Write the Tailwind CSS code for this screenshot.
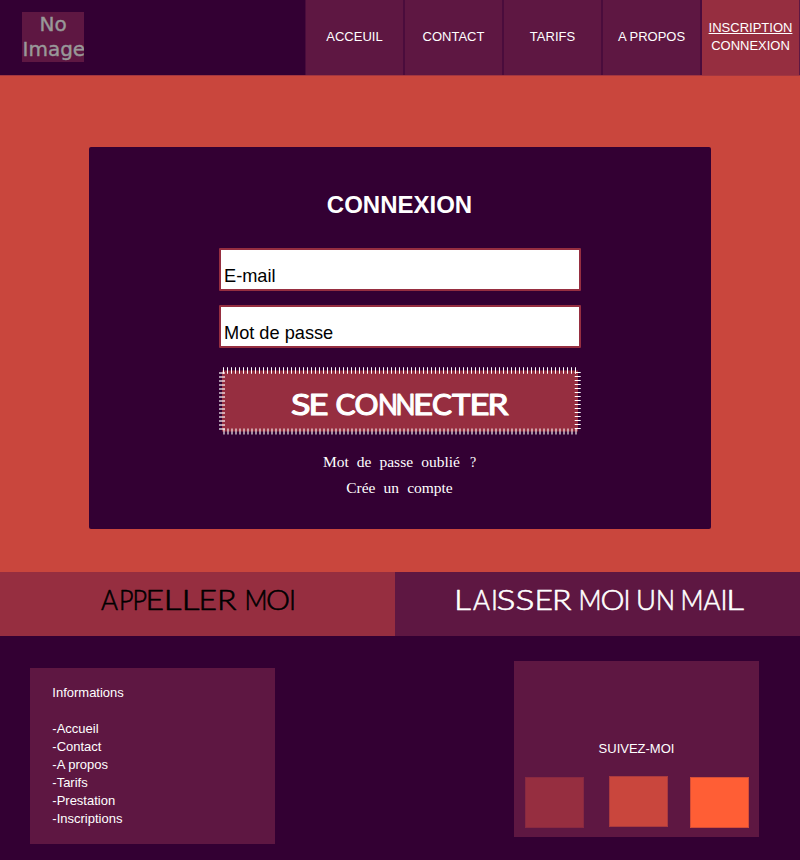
<!DOCTYPE html>
<html lang="fr">
<head>
<meta charset="utf-8">
<title>Connexion</title>
<script src="https://cdn.jsdelivr.net/npm/@tailwindcss/browser@4"></script>
</head>
<body class="w-[800px] h-[860px] overflow-hidden bg-[#330033] text-white text-[13px] leading-[18px] font-['Liberation_Sans',sans-serif]">
<header class="h-[75px] flex">
  <div class="w-[305px] pl-[22px] pt-3">
    <div class="w-[62px] h-[50px] bg-[#5e1742] font-['DejaVu_Sans',sans-serif]">
      <svg class="block" width="62" height="50" fill="#999" stroke="#999" stroke-width=".4" font-size="20"><text x="17.5" y="19">No</text><text x="0.5" y="44">Image</text></svg>
    </div>
  </div>
  <nav class="flex text-center border-l border-[#4a0c3c]">
    <a class="w-[99px] bg-[#5e1742] border-r-2 border-[#4a0c3c] flex items-center justify-center pb-[2px]">ACCEUIL</a>
    <a class="w-[99px] bg-[#5e1742] border-r-2 border-[#4a0c3c] flex items-center justify-center pb-[2px]">CONTACT</a>
    <a class="w-[99px] bg-[#5e1742] border-r-2 border-[#4a0c3c] flex items-center justify-center pb-[2px]">TARIFS</a>
    <a class="w-[99px] bg-[#5e1742] border-r-2 border-[#4a0c3c] flex items-center justify-center pb-[2px]">A PROPOS</a>
    <div class="w-[98px] bg-[#962e40] border-r border-[#5e1742] flex flex-col items-center justify-center pb-[2px]">
      <a class="underline">INSCRIPTION</a>
      <a>CONNEXION</a>
    </div>
  </nav>
</header>
<main class="h-[497px] bg-[#c9463d] border-t border-[#a23640] pt-[71px]">
  <section class="mx-auto w-[622px] h-[382px] rounded-[2px] bg-[#330033] pt-[44px] flex flex-col items-center">
    <h1 class="text-2xl leading-7 font-bold -ml-px">CONNEXION</h1>
    <div class="mt-[29px] w-[362px] h-[43px] shrink-0 border-2 border-[#962e40] rounded-[1px] bg-white text-black text-[18.2px] leading-[20px] pl-[3px] pt-[16px]">E-mail</div>
    <div class="mt-[14px] w-[362px] h-[43px] shrink-0 border-2 border-[#962e40] rounded-[1px] bg-white text-black text-[18.2px] leading-[20px] pl-[3px] pt-[16px]">Mot de passe</div>
    <button class="block mt-[19px] w-[362px] h-[68px] shrink-0">
      <svg class="block" width="362" height="68" fill="none">
        <rect x="3" y="3.5" width="356" height="61" fill="#962e40"/>
        <path d="M4 3.5H359" stroke="#fff" stroke-width="6.5" stroke-dasharray="1 3"/>
        <path d="M3 5V64" stroke="#fff" stroke-opacity=".6" stroke-width="6" stroke-dasharray="2 2"/>
        <path d="M358.7 5V63" stroke="#fff" stroke-width="6" stroke-dasharray="1 3"/>
        <path d="M4 64.5H359" stroke="#fff" stroke-opacity=".55" stroke-width="6" stroke-dasharray="2 2"/>
        <text y="47.5" fill="#fff" stroke="#fff" stroke-width="1.1" stroke-linejoin="round" font-family="Lato, sans-serif" font-size="28"><tspan x="72" textLength="19.5" lengthAdjust="spacingAndGlyphs">S</tspan><tspan x="89.5" textLength="20" lengthAdjust="spacingAndGlyphs">E</tspan> <tspan x="116.5" textLength="20" lengthAdjust="spacingAndGlyphs">C</tspan><tspan x="135.5" textLength="24" lengthAdjust="spacingAndGlyphs">O</tspan><tspan x="159" textLength="20" lengthAdjust="spacingAndGlyphs">N</tspan><tspan x="176.5" textLength="20" lengthAdjust="spacingAndGlyphs">N</tspan><tspan x="194" textLength="20" lengthAdjust="spacingAndGlyphs">E</tspan><tspan x="213" textLength="20" lengthAdjust="spacingAndGlyphs">C</tspan><tspan x="233" textLength="18.5" lengthAdjust="spacingAndGlyphs">T</tspan><tspan x="250.5" textLength="20" lengthAdjust="spacingAndGlyphs">E</tspan><tspan x="268.5" textLength="21" lengthAdjust="spacingAndGlyphs">R</tspan></text>
      </svg>
    </button>
    <a class="mt-[14px] -ml-px text-[15.5px] leading-[26px] whitespace-nowrap font-['Liberation_Serif',serif] [word-spacing:4.2px]">Mot de passe oublié<span class="ml-[10px] text-[14px]">?</span></a>
    <a class="-mt-px text-[15.5px] leading-[26px] -ml-px whitespace-nowrap font-['Liberation_Serif',serif] [word-spacing:4.2px]">Crée un compte</a>
  </section>
</main>
<div class="flex h-[64px]">
  <a class="w-[395px] bg-[#962e40] block">
    <svg class="block" width="395" height="64" fill="#000" stroke="#000" stroke-width=".6" stroke-linejoin="round" font-family="Lato, sans-serif" font-weight="300" font-size="28"><text y="38.3"><tspan x="101" textLength="17" lengthAdjust="spacingAndGlyphs">A</tspan><tspan x="119" textLength="14.5" lengthAdjust="spacingAndGlyphs">P</tspan><tspan x="132.5" textLength="14.5" lengthAdjust="spacingAndGlyphs">P</tspan><tspan x="145.5" textLength="18.5" lengthAdjust="spacingAndGlyphs">E</tspan><tspan x="163.5" textLength="18" lengthAdjust="spacingAndGlyphs">L</tspan><tspan x="181.5" textLength="18" lengthAdjust="spacingAndGlyphs">L</tspan><tspan x="198.5" textLength="18.5" lengthAdjust="spacingAndGlyphs">E</tspan><tspan x="217" textLength="19.5" lengthAdjust="spacingAndGlyphs">R</tspan> <tspan x="244.5" textLength="23" lengthAdjust="spacingAndGlyphs">M</tspan><tspan x="266" textLength="24" lengthAdjust="spacingAndGlyphs">O</tspan><tspan x="289" textLength="7" lengthAdjust="spacingAndGlyphs">I</tspan></text></svg>
  </a>
  <a class="w-[405px] bg-[#5e1742] block">
    <svg class="block" width="405" height="64" fill="#fff" stroke="#fff" stroke-width=".6" stroke-linejoin="round" font-family="Lato, sans-serif" font-weight="300" font-size="28"><text y="38.3"><tspan x="59" textLength="17" lengthAdjust="spacingAndGlyphs">L</tspan><tspan x="78" textLength="17" lengthAdjust="spacingAndGlyphs">A</tspan><tspan x="96" textLength="7" lengthAdjust="spacingAndGlyphs">I</tspan><tspan x="101.5" textLength="19" lengthAdjust="spacingAndGlyphs">S</tspan><tspan x="120.5" textLength="19" lengthAdjust="spacingAndGlyphs">S</tspan><tspan x="139.5" textLength="18.5" lengthAdjust="spacingAndGlyphs">E</tspan><tspan x="157" textLength="19.5" lengthAdjust="spacingAndGlyphs">R</tspan> <tspan x="183.5" textLength="23" lengthAdjust="spacingAndGlyphs">M</tspan><tspan x="205.5" textLength="24" lengthAdjust="spacingAndGlyphs">O</tspan><tspan x="228.5" textLength="7" lengthAdjust="spacingAndGlyphs">I</tspan> <tspan x="241" textLength="20" lengthAdjust="spacingAndGlyphs">U</tspan><tspan x="261" textLength="19" lengthAdjust="spacingAndGlyphs">N</tspan> <tspan x="285.5" textLength="23" lengthAdjust="spacingAndGlyphs">M</tspan><tspan x="308.5" textLength="17" lengthAdjust="spacingAndGlyphs">A</tspan><tspan x="325.5" textLength="7" lengthAdjust="spacingAndGlyphs">I</tspan><tspan x="331" textLength="18" lengthAdjust="spacingAndGlyphs">L</tspan></text></svg>
  </a>
</div>
<footer class="flex justify-between pl-[30px] pr-[41px] h-[224px]">
  <section class="mt-8 w-[245px] h-[176px] bg-[#5e1742] pl-[22.3px] pt-4">
    <h2 class="mb-[18px]">Informations</h2>
    <ul>
      <li>-Accueil</li><li>-Contact</li><li>-A propos</li><li>-Tarifs</li><li>-Prestation</li><li>-Inscriptions</li>
    </ul>
  </section>
  <section class="mt-[25px] w-[245px] h-[176px] bg-[#5e1742] pt-[79px]">
    <h2 class="text-center">SUIVEZ-MOI</h2>
    <div class="mt-[18px] flex pl-[11px]">
      <a class="mt-px w-[59px] h-[51px] bg-[#962e40] border border-[#882941]"></a>
      <a class="ml-[25px] w-[59px] h-[51px] bg-[#c9463d] border border-[#aa3a3e]"></a>
      <a class="ml-[22px] mt-px w-[59px] h-[51px] bg-[#ff5e35] border border-[#d44e38]"></a>
    </div>
  </section>
</footer>
</body>
</html>
